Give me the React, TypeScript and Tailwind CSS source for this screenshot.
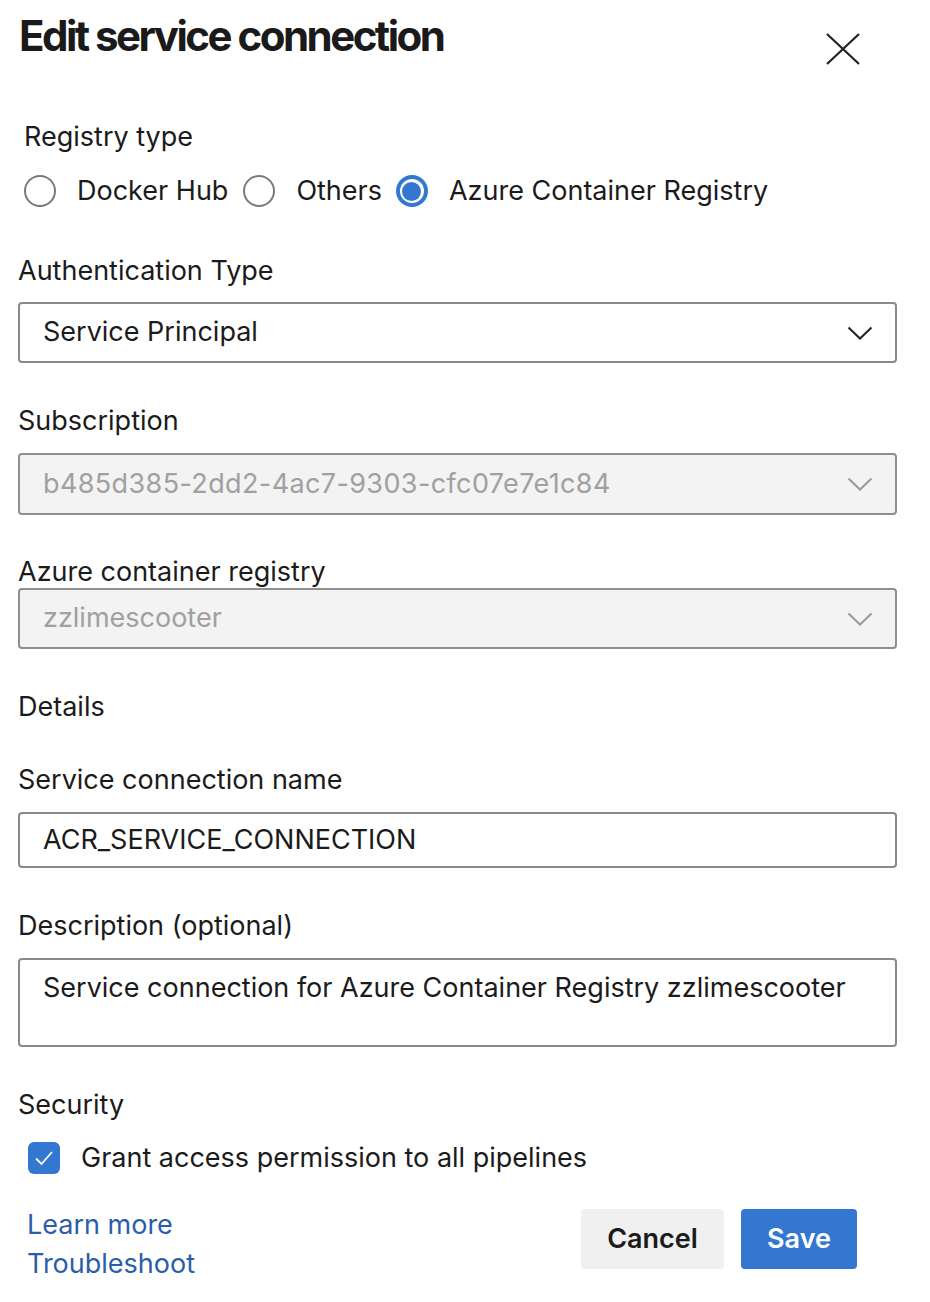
import React from 'react'

const Chevron = ({ muted }: { muted?: boolean }) => (
  <svg width="26" height="14" viewBox="0 0 26 14" fill="none">
    <path d="M1.5 1.5 L13 12.5 L24.5 1.5" stroke={muted ? '#9a9a9a' : '#222'} strokeWidth="2" />
  </svg>
)

const Radio = ({ checked }: { checked?: boolean }) =>
  checked ? (
    <span className="flex h-[32px] w-[32px] items-center justify-center rounded-full bg-[#3377d1]">
      <span className="flex h-[24px] w-[24px] items-center justify-center rounded-full bg-white">
        <span className="h-[19px] w-[19px] rounded-full bg-[#3377d1]" />
      </span>
    </span>
  ) : (
    <span className="h-[32px] w-[32px] rounded-full border-2 border-[#7a7a7a] bg-white" />
  )

const Label = ({ children, className = '' }: { children: React.ReactNode; className?: string }) => (
  <div className={`h-[32px] leading-[32px] text-[27px] text-[#1b1b1b] ${className}`}>{children}</div>
)

export default function App() {
  return (
    <main
      className="min-h-[1302px] w-[930px] bg-white pl-[18px] text-[#1b1b1b]"
      style={{ fontFamily: 'Inter, "Noto Sans", sans-serif' }}
    >
      {/* header */}
      <div className="flex items-start justify-between pr-[70px] pt-[14px]">
        <h1 className="ml-[1px] h-[44px] text-[42px] font-bold leading-[44px] tracking-[-0.06em] text-[#1a1a1a]">
          Edit service connection
        </h1>
        <svg className="mt-[19px]" width="34" height="32" viewBox="0 0 34 32" fill="none">
          <path d="M1 1 L33 31 M33 1 L1 31" stroke="#222" strokeWidth="2.2" />
        </svg>
      </div>

      {/* registry type */}
      <Label className="ml-[6px] mt-[56px]">Registry type</Label>
      <div className="ml-[6px] mt-[22px] flex h-[32px] items-center text-[27px]">
        <Radio />
        <span className="ml-[21px] mr-[15px]">Docker Hub</span>
        <Radio />
        <span className="ml-[21px] mr-[14px]">Others</span>
        <Radio checked />
        <span className="ml-[21px]">Azure Container Registry</span>
      </div>

      <Label className="mt-[48px]">Authentication Type</Label>
      <div className="mt-[15px] flex h-[61px] w-[879px] items-center justify-between rounded-[4px] border-2 border-[#8a8a8a] pl-[23px] pr-[22px] text-[27px]">
        <span>Service Principal</span>
        <Chevron />
      </div>

      <Label className="mt-[42px]">Subscription</Label>
      <div className="mt-[16px] flex h-[62px] w-[879px] items-center justify-between rounded-[4px] border-2 border-[#8f8f8f] bg-[#f3f3f3] pl-[23px] pr-[22px] text-[27px] text-[#a0a0a0]">
        <span className="tracking-[0.014em]">b485d385-2dd2-4ac7-9303-cfc07e7e1c84</span>
        <Chevron muted />
      </div>

      <Label className="mt-[41px]">Azure container registry</Label>
      <div className="flex h-[61px] w-[879px] items-center justify-between rounded-[4px] border-2 border-[#8f8f8f] bg-[#f3f3f3] pl-[23px] pr-[22px] text-[27px] text-[#a0a0a0]">
        <span>zzlimescooter</span>
        <Chevron muted />
      </div>

      <Label className="mt-[42px]">Details</Label>

      <Label className="mt-[41px]">Service connection name</Label>
      <div className="mt-[16px] flex h-[56px] w-[879px] items-center rounded-[4px] border-2 border-[#8a8a8a] pl-[23px] text-[27px]">
        ACR_SERVICE_CONNECTION
      </div>

      <Label className="mt-[42px]">Description (optional)</Label>
      <div className="mt-[16px] h-[89px] w-[879px] rounded-[4px] border-2 border-[#8a8a8a] pl-[23px] pt-[12px] text-[27px] leading-[32px]">
        Service connection for Azure Container Registry zzlimescooter
      </div>

      <Label className="mt-[42px]">Security</Label>
      <div className="ml-[10px] mt-[21px] flex h-[32px] items-center text-[27px]">
        <span className="flex h-[32px] w-[32px] items-center justify-center rounded-[6px] bg-[#3377d1]">
          <svg width="20" height="16" viewBox="0 0 20 16" fill="none">
            <path d="M2 8.5 L7.5 14 L18 2" stroke="white" strokeWidth="1.8" />
          </svg>
        </span>
        <span className="ml-[21px]">Grant access permission to all pipelines</span>
      </div>

      {/* footer */}
      <div className="mt-[35px] flex w-[879px] items-start justify-between pr-[40px]">
        <div className="ml-[9px] flex flex-col gap-[7px] text-[27px] leading-[32px] text-[#2a5ea9]">
          <a>Learn more</a>
          <a>Troubleshoot</a>
        </div>
        <div className="flex gap-[17px]">
          <button className="h-[60px] w-[143px] rounded-[4px] bg-[#f0f0f0] text-[27px] font-semibold text-[#1b1b1b]">
            Cancel
          </button>
          <button className="h-[60px] w-[116px] rounded-[4px] bg-[#3377d1] text-[27px] font-semibold text-white">
            Save
          </button>
        </div>
      </div>
    </main>
  )
}
